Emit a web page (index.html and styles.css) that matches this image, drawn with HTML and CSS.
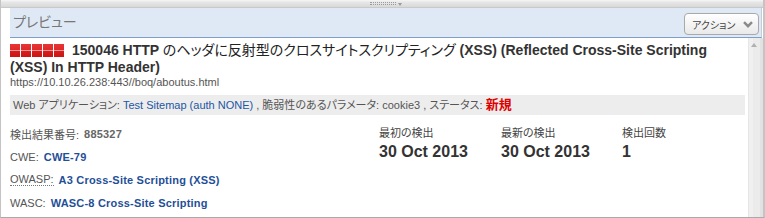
FILE: index.html
```html
<!DOCTYPE html>
<html lang="ja">
<head>
<meta charset="utf-8">
<link rel="stylesheet" href="styles.css">
</head>
<body>
<div class="frame">
  <div class="topbar"><span class="grip"></span><span class="grip-arrow"></span></div>
  <div class="panel">
    <div class="header">
      <span class="header-title">プレビュー</span>
      <button class="action"><span class="action-text">アクション</span><svg class="chev" width="10" height="7" viewBox="0 0 10 7"><polyline points="1,1.2 5,5.2 9,1.2" fill="none" stroke="#8a8a8a" stroke-width="2.4" stroke-linejoin="miter"/></svg></button>
    </div>
    <div class="body">
      <div class="content">
        <h1 class="title"><span class="sev"><i></i><i></i><i></i><i></i><i></i></span>150046 HTTP <span class="ja">のヘッダに反射型のクロスサイトスクリプティング</span> (XSS) (Reflected Cross-Site Scripting (XSS) In HTTP Header)</h1>
        <div class="url">https://10.10.26.238:443//boq/aboutus.html</div>
        <div class="meta">Web アプリケーション: <a class="link">Test Sitemap (auth NONE)</a> , 脆弱性のあるパラメータ: cookie3 , ステータス: <b class="status">新規</b></div>
        <div class="details">
          <div class="refs">
            <div class="ref"><span class="lbl">検出結果番号:</span><span class="num">885327</span></div>
            <div class="ref"><span class="lbl">CWE:</span><a class="val">CWE-79</a></div>
            <div class="ref"><span class="lbl abbr">OWASP:</span><a class="val">A3 Cross-Site Scripting (XSS)</a></div>
            <div class="ref"><span class="lbl">WASC:</span><a class="val">WASC-8 Cross-Site Scripting</a></div>
          </div>
          <div class="stat s1"><div class="stat-lbl">最初の検出</div><div class="stat-val">30 Oct 2013</div></div>
          <div class="stat s2"><div class="stat-lbl">最新の検出</div><div class="stat-val">30 Oct 2013</div></div>
          <div class="stat s3"><div class="stat-lbl">検出回数</div><div class="stat-val">1</div></div>
        </div>
      </div>
      <div class="scrollbar"><span class="up"></span></div>
    </div>
  </div>
</div>
</body>
</html>
```

FILE: styles.css
```css
* { box-sizing: border-box; }
html, body { margin: 0; padding: 0; background: #fff; }
body {
  width: 765px;
  height: 218px;
  overflow: hidden;
  font-family: "Liberation Sans", "Noto Sans CJK JP", sans-serif;
  font-feature-settings: "palt";
  color: #333;
}
.frame {
  width: 765px;
  height: 218px;
  border-left: 1px solid #c4c4c4;
  border-right: 2px solid #c4c4c4;
  border-bottom: 1px solid #a9a9a9;
  display: flex;
  flex-direction: column;
  overflow: hidden;
}
.topbar {
  height: 8px;
  flex: 0 0 8px;
  background: linear-gradient(#f6f6f6 0, #e6e6e6 30%, #d9d9d9 85%, #bdbdbd 100%);
  display: flex;
  justify-content: center;
  align-items: flex-start;
  padding-top: 2px;
  padding-left: 8px;
}
.grip {
  width: 26px;
  height: 3px;
  border-top: 1px dotted #9a9a9a;
  border-bottom: 1px dotted #9a9a9a;
}
.grip-arrow {
  width: 0;
  height: 0;
  margin-left: 2px;
  margin-top: 1px;
  border-left: 2px solid transparent;
  border-right: 2px solid transparent;
  border-top: 3px solid #9a9a9a;
}
.panel {
  flex: 1;
  padding-left: 9px;
  display: flex;
  flex-direction: column;
  min-height: 0;
}
.header {
  height: 30px;
  flex: 0 0 30px;
  margin-right: 1px;
  background: #dfe9f6;
  border-bottom: 1px solid #7f9fcb;
  border-right: 1px solid #c3ccd8;
  display: flex;
  align-items: center;
  justify-content: space-between;
  padding-left: 3px;
}
.header-title {
  font-size: 14px;
  color: #777;
  line-height: 29px;
}
.action {
  align-self: flex-end;
  flex: 0 0 75px;
  margin: 0 2px 2px 0;
  width: 75px;
  height: 22px;
  border: 1px solid #a9a9a9;
  border-radius: 4px;
  background: linear-gradient(#ffffff, #e9e9e9);
  font-family: inherit;
  font-feature-settings: "palt";
  font-size: 10px;
  color: #444;
  padding: 0 5px 0 7px;
  display: flex;
  align-items: center;
  justify-content: space-between;
  white-space: nowrap;
}
.action-text { white-space: nowrap; }
.chev { display: block; flex: 0 0 10px; }
.body {
  flex: 1;
  display: flex;
  min-height: 0;
}
.content {
  flex: 1;
  padding: 4px 3px 0 0;
  min-width: 0;
}
.scrollbar {
  flex: 0 0 15px;
  background: linear-gradient(90deg, #e6e6e6 0 1px, #f0f0f0 1px 5px, #ebebeb 5px 12px, #e2e2e2 12px);
  display: flex;
  justify-content: center;
  padding-top: 5px;
  padding-right: 3px;
}
.up {
  width: 0;
  height: 0;
  border-left: 3px solid transparent;
  border-right: 3px solid transparent;
  border-bottom: 4px solid #b0b0b0;
}
.title {
  margin: 0;
  font-size: 14px;
  font-weight: bold;
  line-height: 17px;
  color: #333;
}
.title .ja { font-weight: normal; color: #222; }
.sev {
  display: inline-flex;
  gap: 1px;
  margin-right: 8px;
  vertical-align: -2px;
}
.sev i {
  display: block;
  width: 10px;
  height: 13px;
  background: linear-gradient(#e63535 0, #e02a2a 44%, #f29a9a 46%, #f29a9a 54%, #d71c1c 56%, #cc1515 100%);
}
.url {
  font-size: 11px;
  line-height: 13px;
  color: #555;
}
.meta {
  margin-top: 6px;
  height: 20px;
  line-height: 20px;
  background: #ededed;
  padding-left: 3px;
  font-size: 11px;
  color: #555;
  white-space: nowrap;
}
.link { color: #2256a5; text-decoration: none; }
.status { color: #e00000; font-size: 13px; font-weight: bold; }
.details {
  display: flex;
  margin-top: 7px;
}
.refs {
  flex: 0 0 369px;
}
.ref {
  height: 23px;
  display: flex;
  align-items: center;
  gap: 5px;
}
.lbl {
  font-size: 11px;
  color: #555;
}
.abbr {
  border-bottom: 1px dotted #777;
  line-height: 12px;
}
.num {
  font-size: 11px;
  font-weight: bold;
  letter-spacing: 0.2px;
  color: #666;
}
.val {
  font-size: 11px;
  font-weight: bold;
  letter-spacing: 0.2px;
  color: #1f4f97;
  text-decoration: none;
}
.stat { padding-top: 1px; }
.s1 { flex: 0 0 122px; }
.s2 { flex: 0 0 121px; }
.s3 { flex: 1; }
.stat-lbl {
  font-size: 11px;
  line-height: 20px;
  color: #444;
}
.stat-val {
  font-size: 16px;
  font-weight: bold;
  line-height: 18px;
  color: #333;
}
```
